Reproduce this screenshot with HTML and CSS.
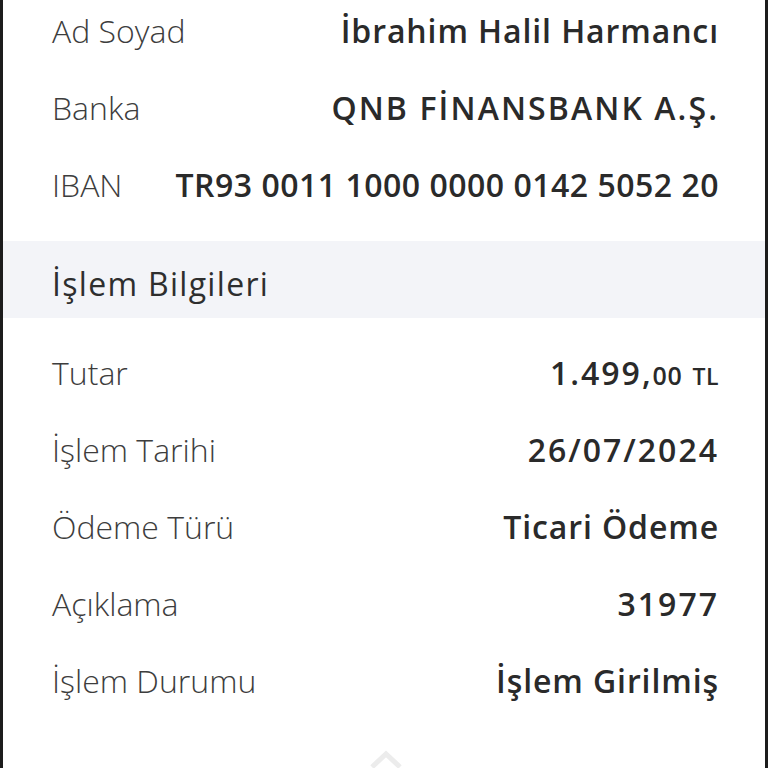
FILE: index.html
```html
<!DOCTYPE html>
<html lang="tr">
<head>
    <meta charset="UTF-8">
    <meta name="viewport" content="width=device-width, initial-scale=1.0">
    <title>İşlem Detayı</title>
    <link rel="stylesheet" href="styles.css">
</head>
<body>
    <div class="screen">
        <div class="group first">
            <div class="row">
                <span class="label">Ad Soyad</span>
                <span class="value">İbrahim Halil Harmancı</span>
            </div>
            <div class="row">
                <span class="label">Banka</span>
                <span class="value caps">QNB FİNANSBANK A.Ş.</span>
            </div>
            <div class="row">
                <span class="label">IBAN</span>
                <span class="value iban">TR93 0011 1000 0000 0142 5052 20</span>
            </div>
        </div>

        <div class="section-title">İşlem Bilgileri</div>

        <div class="group">
            <div class="row">
                <span class="label">Tutar</span>
                <span class="value digits">1.499,<span class="cents">00</span> <span class="currency">TL</span></span>
            </div>
            <div class="row">
                <span class="label">İşlem Tarihi</span>
                <span class="value digits">26/07/2024</span>
            </div>
            <div class="row">
                <span class="label">Ödeme Türü</span>
                <span class="value">Ticari Ödeme</span>
            </div>
            <div class="row">
                <span class="label">Açıklama</span>
                <span class="value digits">31977</span>
            </div>
            <div class="row">
                <span class="label">İşlem Durumu</span>
                <span class="value">İşlem Girilmiş</span>
            </div>
        </div>

        <div class="scroll-hint">
            <svg width="40" height="20" viewBox="0 0 40 20">
                <polyline points="6,18 20,5 34,18" fill="none" stroke="#ececec" stroke-width="5"/>
            </svg>
        </div>
    </div>
</body>
</html>
```

FILE: styles.css
```css
body {
    margin: 0;
    background-color: #fff;
    font-family: "Open Sans", "Noto Sans", sans-serif;
}
.screen {
    width: 768px;
    height: 768px;
    box-sizing: border-box;
    border-left: 3px solid #1c1c1c;
    border-right: 3px solid #1c1c1c;
    background-color: #fff;
    overflow: hidden;
    position: relative;
}
.group.first {
    margin-top: -8px;
}
.row {
    height: 77px;
    display: flex;
    justify-content: space-between;
    align-items: center;
    padding: 0 46px 0 49px;
}
.label {
    font-size: 32px;
    font-weight: 300;
    color: #3d3d3d;
}
.value {
    font-size: 32px;
    font-weight: 600;
    letter-spacing: 0.9px;
    color: #2a2a2a;
}
.value.caps {
    letter-spacing: 2.1px;
}
.value.iban {
    letter-spacing: 0.5px;
}
.value.digits {
    letter-spacing: 2px;
}
.cents {
    font-size: 25px;
    letter-spacing: 0.5px;
}
.currency {
    font-size: 23px;
    letter-spacing: 0.5px;
}
.section-title {
    margin: 18px 0 16px;
    height: 77px;
    padding: 8px 0 0 49px;
    box-sizing: border-box;
    display: flex;
    align-items: center;
    background-color: #f3f4f8;
    font-size: 32px;
    font-weight: 400;
    letter-spacing: 1.3px;
    color: #2e2e2e;
}
.scroll-hint {
    position: absolute;
    left: 363px;
    bottom: -6px;
}
```
